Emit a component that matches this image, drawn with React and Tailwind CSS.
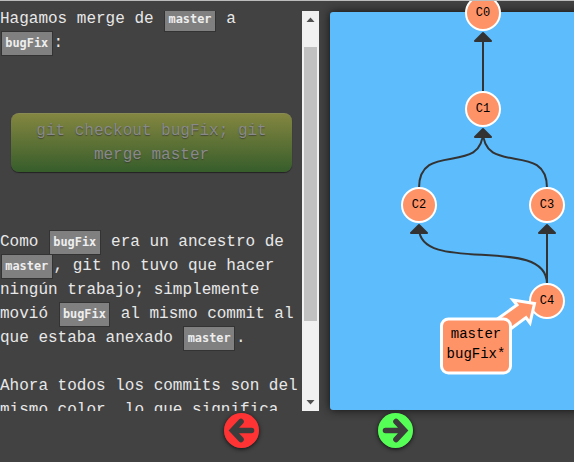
import React from 'react';

function Code({ children }) {
  return (
    <code className="mx-px -my-2 inline-block h-[25px] w-[51.5px] border border-[#333] bg-[#808080] text-center align-baseline font-['DejaVu_Sans_Mono',monospace] text-[11.9px] leading-[23px] font-bold whitespace-nowrap text-[#eee]">
      {children}
    </code>
  );
}

function Line({ children }) {
  return <div className="h-6 whitespace-pre">{children}</div>;
}

function Lesson() {
  return (
    <div className="h-[400px] w-[302px] shrink-0 overflow-hidden">
      <div className="-mt-1 text-base leading-6 text-[#e8e8e8]">
        <Line>Hagamos merge de <Code>master</Code> a</Line>
        <Line><Code>bugFix</Code>:</Line>
        <div className="mt-[58px] ml-[11px] flex h-[59px] w-[281px] flex-col items-center rounded-lg border-t border-[#898b55] bg-linear-to-b from-[#838640] to-[#365d2b] pt-[5px] text-[#898989] shadow-[0_1px_1px_#222] [text-shadow:0_1px_1px_#333a]">
          <Line>git checkout bugFix; git</Line>
          <Line>merge master</Line>
        </div>
        <div className="mt-[58px]">
          <Line>Como <Code>bugFix</Code> era un ancestro de</Line>
          <Line><Code>master</Code>, git no tuvo que hacer</Line>
          <Line>ningún trabajo; simplemente</Line>
          <Line>movió <Code>bugFix</Code> al mismo commit al</Line>
          <Line>que estaba anexado <Code>master</Code>.</Line>
        </div>
        <div className="mt-6">
          <Line>Ahora todos los commits son del</Line>
          <Line>mismo color, lo que significa</Line>
        </div>
      </div>
    </div>
  );
}

function Scrollbar() {
  return (
    <div className="flex h-[400px] w-[17px] shrink-0 flex-col items-center bg-[#f1f1f1]">
      <svg width="17" height="36" viewBox="0 0 17 36"><path d="M4.500 11 8.500 6.500 12.500 11z" fill="#505050" /></svg>
      <div className="h-[274px] w-[13px] bg-[#c1c1c1]" />
      <div className="grow" />
      <svg width="17" height="17" viewBox="0 0 17 17"><path d="M4.500 6 8.500 10.500 12.500 6z" fill="#505050" /></svg>
    </div>
  );
}

const commits = [
  ['C0', 153, 1],
  ['C1', 153, 97],
  ['C2', 89, 193],
  ['C3', 217, 193],
  ['C4', 217, 289],
];

const heads = [[153, 20], [153, 116], [89, 212], [217, 212]];

function Tree() {
  return (
    <svg className="block overflow-visible" width="244" height="398" viewBox="0 0 244 398">
      <g fill="none" stroke="#333" strokeWidth="2">
        <path d="M153 80V28" />
        <path d="M89 176C89 128 153 165 153 119" />
        <path d="M217 176C217 128 153 165 153 119" />
        <path d="M217 272V220" />
        <path d="M217 272C217 221 89 264 89 216" />
      </g>
      {heads.map(([x, y]) => (
        <path key={`${x}-${y}`} d={`M${x} ${y + 1}L${x + 8} ${y + 9}H${x - 8}Z`} fill="#333" stroke="#333" strokeWidth="2" strokeLinejoin="round" />
      ))}
      {commits.map(([id, x, y]) => (
        <g key={id}>
          <circle cx={x} cy={y} r="17" fill="#ff9368" stroke="#fff" strokeWidth="2" />
          <text x={x} y={y + 3} textAnchor="middle" fontSize="12" fill="#000">{id}</text>
        </g>
      ))}
      <path d="M166 308 187 293 183 288 204.5 291.500 200 311 196 305.500 175 321Z" fill="#ff9368" stroke="#fff" strokeWidth="3" />
      <rect x="111.500" y="307" width="69" height="54" rx="7" fill="#ff9368" stroke="#fff" strokeWidth="3" />
      <text x="146" y="326" textAnchor="middle" fontSize="14">master</text>
      <text x="146" y="346" textAnchor="middle" fontSize="14">bugFix*</text>
    </svg>
  );
}

function NavButton({ label, color, flip }) {
  return (
    <button aria-label={label} className="size-[35px] rounded-full shadow-[0_1px_4px_#111]">
      <svg width="35" height="35" viewBox="0 0 35 35" className={flip ? '-scale-x-100' : ''}>
        <circle cx="17.500" cy="17.500" r="17.500" fill={color} />
        <path d="M17 8.500 8.500 17.500 17 26.500M9 17.500H27.500" fill="none" stroke="#3c3c3c" strokeWidth="5.600" strokeLinecap="round" strokeLinejoin="miter" />
      </svg>
    </button>
  );
}

export default function App() {
  return (
    <div className="h-[462px] w-[574px] overflow-hidden border-t border-[#bcbcbc] bg-[#424242] font-['Liberation_Mono',monospace]">
      <div className="flex h-[403px] pt-[10px]">
        <Lesson />
        <Scrollbar />
        <div className="mt-px ml-[11px] h-[398px] w-[260px] shrink-0 rounded-[3px] bg-[#5cbcfc] shadow-[0_0_10px_#111]">
          <Tree />
        </div>
      </div>
      <div className="flex gap-[119px] pt-[9px] pl-[224px]">
        <NavButton label="Anterior" color="#ff3333" />
        <NavButton label="Siguiente" color="#55ff55" flip />
      </div>
    </div>
  );
}
